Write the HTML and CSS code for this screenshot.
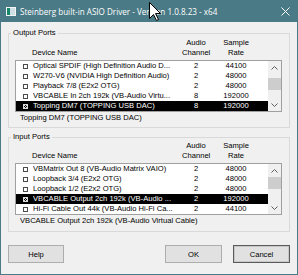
FILE: index.html
```html
<!DOCTYPE html>
<html>
<head>
<meta charset="utf-8">
<link rel="stylesheet" href="styles.css">
</head>
<body>
<div class="win">
  <div class="titlebar">
    <svg class="appicon" width="10" height="9" viewBox="0 0 10 9"><rect x="0" y="0" width="10" height="9" fill="#f4f4f4"/><rect x="1" y="1" width="8" height="7" fill="#cfe0e4"/><rect x="1" y="1" width="3" height="7" fill="#17876b"/></svg>
    <span class="title">Steinberg built-in ASIO Driver - Version 1.0.8.23 - x64</span>
    <svg class="close" width="9" height="9" viewBox="0 0 9 9"><path d="M0.5 0.5 L8.5 8.5 M8.5 0.5 L0.5 8.5" stroke="#fff" stroke-width="1" fill="none"/></svg>
  </div>
  <div class="client">
    <fieldset class="group">
      <legend>Output Ports</legend>
      <div class="hdr">
        <span class="h-name">Device Name</span>
        <span class="h-col">Audio<br>Channel</span>
        <span class="h-col">Sample<br>Rate</span>
      </div>
      <div class="list">
        <div class="rows">
          <div class="row"><i class="cb"></i><span class="name">Optical SPDIF (High Definition Audio D...</span><span class="num">2</span><span class="num">44100</span></div>
          <div class="row"><i class="cb"></i><span class="name">W270-V6 (NVIDIA High Definition Audio)</span><span class="num">2</span><span class="num">48000</span></div>
          <div class="row"><i class="cb"></i><span class="name">Playback 7/8 (E2x2 OTG)</span><span class="num">2</span><span class="num">48000</span></div>
          <div class="row"><i class="cb"></i><span class="name">VBCABLE In 2ch 192k (VB-Audio Virtu...</span><span class="num">8</span><span class="num">192000</span></div>
          <div class="row sel"><i class="cb on"></i><span class="name">Topping DM7 (TOPPING USB DAC)</span><span class="num">8</span><span class="num">192000</span></div>
        </div>
        <div class="sb">
          <div class="sb-btn"><svg width="7" height="4" viewBox="0 0 7 4"><path d="M0.5 3.5 L3.5 0.5 L6.5 3.5" stroke="#606060" fill="none"/></svg></div>
          <div class="sb-track"><div class="thumb"></div></div>
          <div class="sb-btn"><svg width="7" height="4" viewBox="0 0 7 4"><path d="M0.5 0.5 L3.5 3.5 L6.5 0.5" stroke="#606060" fill="none"/></svg></div>
        </div>
      </div>
      <div class="status">Topping DM7 (TOPPING USB DAC)</div>
    </fieldset>
    <fieldset class="group in">
      <legend>Input Ports</legend>
      <div class="hdr">
        <span class="h-name">Device Name</span>
        <span class="h-col">Audio<br>Channel</span>
        <span class="h-col">Sample<br>Rate</span>
      </div>
      <div class="list">
        <div class="rows">
          <div class="row"><i class="cb"></i><span class="name">VBMatrix Out 8 (VB-Audio Matrix VAIO)</span><span class="num">2</span><span class="num">48000</span></div>
          <div class="row"><i class="cb"></i><span class="name">Loopback 3/4 (E2x2 OTG)</span><span class="num">2</span><span class="num">48000</span></div>
          <div class="row"><i class="cb"></i><span class="name">Loopback 1/2 (E2x2 OTG)</span><span class="num">2</span><span class="num">48000</span></div>
          <div class="row sel"><i class="cb on"></i><span class="name">VBCABLE Output 2ch 192k (VB-Audio ...</span><span class="num">2</span><span class="num">192000</span></div>
          <div class="row"><i class="cb"></i><span class="name">Hi-Fi Cable Out 44k (VB-Audio Hi-Fi Ca...</span><span class="num">2</span><span class="num">44100</span></div>
        </div>
        <div class="sb">
          <div class="sb-btn"><svg width="7" height="4" viewBox="0 0 7 4"><path d="M0.5 3.5 L3.5 0.5 L6.5 3.5" stroke="#606060" fill="none"/></svg></div>
          <div class="sb-track"><div class="thumb top"></div></div>
          <div class="sb-btn"><svg width="7" height="4" viewBox="0 0 7 4"><path d="M0.5 0.5 L3.5 3.5 L6.5 0.5" stroke="#606060" fill="none"/></svg></div>
        </div>
      </div>
      <div class="status">VBCABLE Output 2ch 192k (VB-Audio Virtual Cable)</div>
    </fieldset>
    <div class="buttons">
      <button class="btn help">Help</button>
      <button class="btn">OK</button>
      <button class="btn default">Cancel</button>
    </div>
  </div>
  <svg class="cursor" width="13" height="20" viewBox="0 0 13 20"><path d="M0.5 0.5 L0.5 16.5 L4.5 12.5 L7.5 18.5 L9.5 17.5 L6.5 11.5 L11.5 11.5 Z" fill="#fff" stroke="#000" stroke-width="1" stroke-linejoin="miter"/></svg>
</div>
</body>
</html>
```
FILE: styles.css
```css
* { box-sizing: border-box; }
html, body { margin: 0; padding: 0; }
body {
  width: 298px;
  height: 275px;
  overflow: hidden;
  background: #f0f0f0;
  font-family: "Liberation Sans", Arial, sans-serif;
  font-size: 7.6px;
  color: #000;
}
.win {
  position: relative;
  width: 298px;
  height: 275px;
  display: flex;
  flex-direction: column;
}
.titlebar {
  height: 22px;
  flex: none;
  background: #4a7a85;
  color: #fff;
  display: flex;
  align-items: center;
  padding-top: 1px;
}
.appicon { margin-left: 6px; flex: none; }
.title {
  margin-left: 4px;
  font-family: "Open Sans", "Noto Sans", sans-serif;
  font-size: 8.1px;
  white-space: nowrap;
}
.close { margin-left: auto; margin-right: 8px; flex: none; }
.client {
  flex: 1;
  border: 1px solid #4a7a85;
  border-top: 0;
  padding: 6px 7px 0 7px;
}
.group {
  margin: 0;
  padding: 0 7px 4px 6px;
  border: 1px solid #d9d9d9;
  min-width: 0;
  line-height: 10px;
}
.group + .group { margin-top: 4px; }
.group legend {
  padding: 0 2px;
  margin-left: -4px;
  line-height: 10px;
  height: 10px;
}
.hdr {
  display: grid;
  grid-template-columns: 167px 28px 52px;
  margin-bottom: 2px;
  line-height: 10px;
}
.in .hdr { margin-top: -1px; }
.in { padding-bottom: 5px; }
.h-name { padding-left: 17px; align-self: end; white-space: nowrap; }
.h-col { text-align: center; white-space: nowrap; }
.list {
  display: flex;
  height: 52px;
  border: 1px solid #a0a0a0;
  background: #fff;
}
.rows { width: 252px; flex: none; }
.row {
  display: grid;
  grid-template-columns: 17px 149px 28px 52px;
  height: 10px;
  line-height: 10px;
  white-space: nowrap;
}
.row.sel { background: #000; color: #fff; }
.cb {
  display: block;
  width: 5px;
  height: 5px;
  margin-left: 7px;
  align-self: center;
  border: 1px solid #4a4a4a;
  background: #fff;
}
.cb.on {
  border-color: #d8d8d8;
  background:
    linear-gradient(45deg, transparent 40%, #d8d8d8 40%, #d8d8d8 60%, transparent 60%),
    linear-gradient(-45deg, transparent 40%, #d8d8d8 40%, #d8d8d8 60%, transparent 60%),
    #000;
}
.name { overflow: hidden; }
.num { text-align: center; }
.sb {
  width: 13px;
  flex: none;
  background: #f0f0f0;
  display: flex;
  flex-direction: column;
}
.sb-btn {
  height: 13px;
  flex: none;
  display: flex;
  align-items: center;
  justify-content: center;
}
.sb-track { flex: 1; }
.thumb { height: 12px; margin-top: 4px; background: #cdcdcd; }
.thumb.top { margin-top: 0; }
.status { margin-top: 1px; padding-left: 5px; white-space: nowrap; }
.buttons {
  display: flex;
  gap: 11px;
  margin-top: 13px;
  padding: 0;
}
.btn {
  width: 57px;
  height: 18px;
  margin: 0;
  padding: 0;
  border: 1px solid #adadad;
  background: #e1e1e1;
  font-family: "Liberation Sans", Arial, sans-serif;
  font-size: 7.6px;
  color: #000;
}
.btn.help { width: 56px; margin-right: auto; }
.btn.default { border-color: #5a5a5a; box-shadow: inset 0 0 0 1px #c8c8c8; }
.cursor { position: absolute; left: 149px; top: 2px; }
```
